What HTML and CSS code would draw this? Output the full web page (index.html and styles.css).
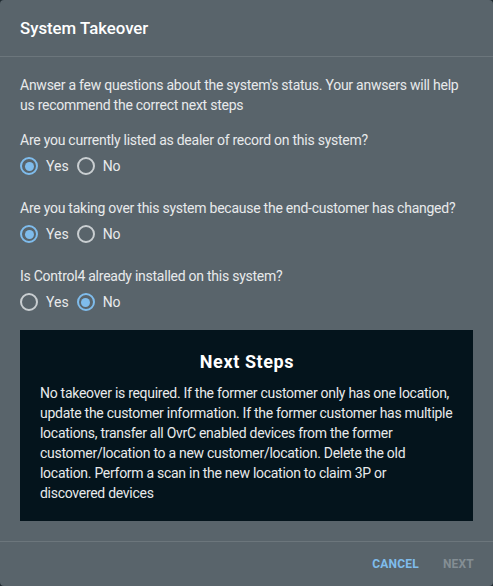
FILE: index.html
```html
<!DOCTYPE html>
<html lang="en">
<head>
<meta charset="utf-8">
<title>System Takeover</title>
<link rel="stylesheet" href="styles.css">
</head>
<body>
<div class="dialog">
  <header class="dialog-header">
    <h2 class="dialog-title">System Takeover</h2>
  </header>
  <main class="dialog-content">
    <p class="intro">Anwser a few questions about the system's status. Your anwsers will help us recommend the correct next steps</p>

    <div class="question">
      <div class="question-label">Are you currently listed as dealer of record on this system?</div>
      <div class="radio-group">
        <label class="radio-option"><span class="radio checked"></span><span class="radio-text">Yes</span></label>
        <label class="radio-option"><span class="radio"></span><span class="radio-text">No</span></label>
      </div>
    </div>

    <div class="question">
      <div class="question-label">Are you taking over this system because the end-customer has changed?</div>
      <div class="radio-group">
        <label class="radio-option"><span class="radio checked"></span><span class="radio-text">Yes</span></label>
        <label class="radio-option"><span class="radio"></span><span class="radio-text">No</span></label>
      </div>
    </div>

    <div class="question">
      <div class="question-label">Is Control4 already installed on this system?</div>
      <div class="radio-group">
        <label class="radio-option"><span class="radio"></span><span class="radio-text">Yes</span></label>
        <label class="radio-option"><span class="radio checked"></span><span class="radio-text">No</span></label>
      </div>
    </div>

    <section class="next-steps">
      <h3 class="next-title">Next Steps</h3>
      <p class="next-body">No takeover is required. If the former customer only has one location, update the customer information. If the former customer has multiple locations, transfer all OvrC enabled devices from the former customer/location to a new customer/location. Delete the old location. Perform a scan in the new location to claim 3P or discovered devices</p>
    </section>
  </main>
  <footer class="dialog-actions">
    <button class="btn btn-primary">Cancel</button>
    <button class="btn btn-disabled">Next</button>
  </footer>
</div>
</body>
</html>
```
FILE: styles.css
```css
* { box-sizing: border-box; }
html, body {
  margin: 0;
  padding: 0;
  background: #1f2a30;
}
body {
  font-family: Roboto, "Noto Sans", sans-serif;
  color: #e8eaeb;
}
.dialog {
  width: 493px;
  height: 586px;
  background: #59646b;
  border-radius: 4px;
  display: flex;
  flex-direction: column;
  overflow: hidden;
}
.dialog-header {
  height: 57px;
  padding: 16px 20px;
  border-bottom: 1px solid #6c767c;
}
.dialog-title {
  margin: 0;
  font-size: 16.8px;
  line-height: 24px;
  font-weight: 500;
  color: #ffffff;
}
.dialog-content {
  flex: 1;
  padding: 18px 20px 20px;
  display: flex;
  flex-direction: column;
}
.intro {
  margin: 0 0 15px;
  font-size: 14px;
  line-height: 20px;
  letter-spacing: -0.25px;
}
.question {
  display: flex;
  flex-direction: column;
  gap: 4px;
  margin-bottom: 20px;
}
.question:last-of-type { margin-bottom: 16px; }
.question-label {
  font-size: 14px;
  line-height: 20px;
  letter-spacing: -0.25px;
}
.radio-group {
  display: flex;
  height: 24px;
  align-items: center;
  gap: 8px;
}
.radio-option {
  display: flex;
  align-items: center;
  gap: 8px;
  font-size: 14px;
  line-height: 20px;
}
.radio {
  width: 18px;
  height: 18px;
  border-radius: 50%;
  border: 2px solid #c9ced1;
  display: flex;
  align-items: center;
  justify-content: center;
}
.radio.checked {
  border-color: #7fbcec;
}
.radio.checked::after {
  content: "";
  width: 9px;
  height: 9px;
  border-radius: 50%;
  background: #7fbcec;
}
.next-steps {
  background: #04141c;
  padding: 18px 19px 18px 20px;
}
.next-title {
  margin: 0 0 7px;
  text-align: center;
  font-size: 18px;
  line-height: 28px;
  font-weight: 700;
  letter-spacing: 0.6px;
  color: #ffffff;
}
.next-body {
  margin: 0;
  font-size: 14px;
  line-height: 20px;
  letter-spacing: -0.28px;
  color: #e8eaeb;
}
.dialog-actions {
  height: 45px;
  border-top: 1px solid #6c767c;
  display: flex;
  justify-content: flex-end;
  align-items: center;
  gap: 24px;
  padding: 0 19px 0 0;
}
.btn {
  background: none;
  border: none;
  padding: 0;
  font-family: Roboto, "Noto Sans", sans-serif;
  font-size: 12px;
  font-weight: 700;
  letter-spacing: 0.2px;
  text-transform: uppercase;
  line-height: 20px;
}
.btn-primary { color: #7fbcec; }
.btn-disabled { color: #848e94; }
```
